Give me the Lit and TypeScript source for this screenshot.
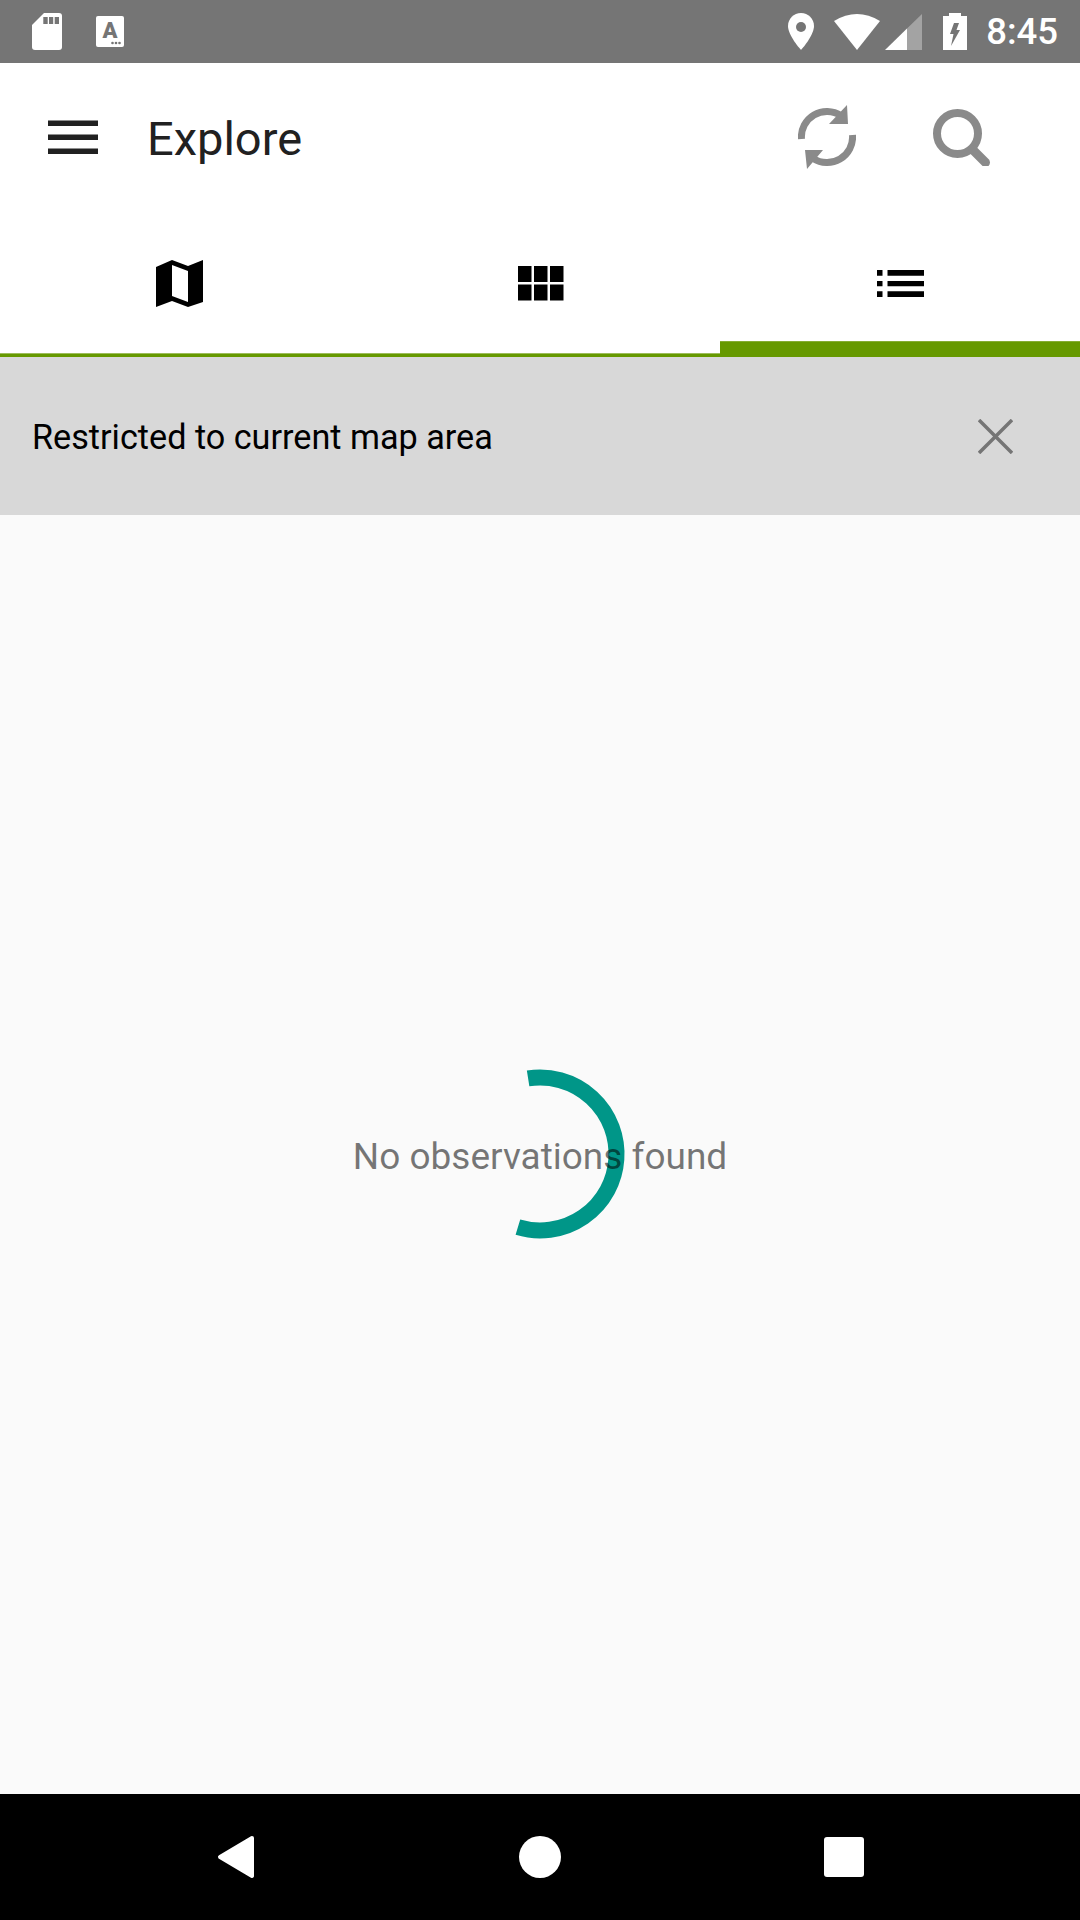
import { LitElement, css, html } from 'lit';
import { customElement } from 'lit/decorators.js';

@customElement('app-root')
export class AppRoot extends LitElement {
  render() {
    return html`
      <div class="status">
        <svg class="sd" width="30" height="37" viewBox="0 0 30 37">
          <path fill="#fff" d="M12 0H27a3 3 0 0 1 3 3V34a3 3 0 0 1-3 3H3a3 3 0 0 1-3-3V12Z" />
          <path fill="#757575" d="M11.3 4h4.4v7h-4.4zM17 4h4.2v7H17zM22.7 4H27v7h-4.3z" />
        </svg>
        <svg class="kbd" width="28" height="31" viewBox="0 0 28 31">
          <rect width="28" height="31" rx="2" fill="#fff" />
          <text x="14" y="22" text-anchor="middle" class="kbd-a">A</text>
          <circle cx="16.5" cy="27" r="1.3" fill="#757575" />
          <circle cx="20" cy="27" r="1.3" fill="#757575" />
          <circle cx="23.5" cy="27" r="1.3" fill="#757575" />
        </svg>
        <svg class="pin" width="26" height="37" viewBox="0 0 26 37">
          <path fill="#fff" d="M13 0C5.8 0 0 5.8 0 13c0 9.7 13 24 13 24s13-14.3 13-24C26 5.800 20.200 0 13 0Z" />
          <circle cx="13" cy="14" r="5" fill="#757575" />
        </svg>
        <svg class="wifi" width="46" height="36" viewBox="0 0 46 36">
          <path fill="#fff" d="M0 7Q23-7 46 7L23 36Z" />
        </svg>
        <svg class="signal" width="37" height="36" viewBox="0 0 37 36">
          <path fill="#fff" d="M0 36 22 14.600V36Z" />
          <path fill="#a3a3a3" d="M22 14.600 37 0V36H22Z" />
        </svg>
        <svg class="battery" width="24" height="37" viewBox="0 0 24 37">
          <path fill="#fff" d="M6 0H18V3H24V37H0V3H6Z" />
          <path fill="#757575" d="M11 10H16L13.500 17H17L8 33 10.500 21H7Z" />
        </svg>
        <span class="time">8:45</span>
      </div>

      <div class="toolbar">
        <svg class="menu" width="50" height="34" viewBox="0 0 50 34">
          <path fill="#212121" d="M0 .5H50V6H0zM0 14.500H50V20H0zM0 28.500H50V34H0z" />
        </svg>
        <span class="title">Explore</span>
        <svg class="refresh" width="58" height="64" viewBox="0 0 58 64">
          <g fill="none" stroke="#8a8a8a" stroke-width="7">
            <path d="M3.500 34A25.500 25.500 0 0 1 43 10.700" />
            <path d="M54.500 30A25.500 25.500 0 0 1 15 53.300" />
          </g>
          <path fill="#8a8a8a" d="M49 0 50 19H31ZM7 45H25L9 64Z" />
        </svg>
        <svg class="search" width="58" height="59" viewBox="0 0 58 59">
          <circle cx="24.500" cy="26.500" r="20.500" fill="none" stroke="#8a8a8a" stroke-width="8" />
          <path d="M40 43 52.500 55.500" fill="none" stroke="#8a8a8a" stroke-width="9" stroke-linecap="round" />
        </svg>
      </div>

      <div class="tabs">
        <div class="tab">
          <svg class="map-icon" width="47" height="47" viewBox="0 0 47 47">
            <path fill-rule="evenodd" d="M0 7 16 0 32 6 47 0V42L32 47 16 41 0 47ZM16 5V36L32 42V11Z" />
          </svg>
        </div>
        <div class="tab">
          <svg class="grid-icon" width="46" height="35" viewBox="0 0 46 35">
            <path d="M0 0H13.500V16H0zM16 0H29.500V16H16zM32 0H45.500V16H32zM0 18.500H13.500V34.500H0zM16 18.500H29.500V34.500H16zM32 18.500H45.500V34.500H32z" />
          </svg>
        </div>
        <div class="tab active">
          <svg width="47" height="27" viewBox="0 0 47 27">
            <path d="M0 0H5.500V5.700H0zM10.500 0H47V5.700H10.500zM0 11H5.500V16.300H0zM10.500 11H47V16.300H10.500zM0 21.300H5.500V27H0zM10.500 21.300H47V27H10.500z" />
          </svg>
        </div>
      </div>

      <div class="banner">
        <span>Restricted to current map area</span>
        <svg width="35" height="35" viewBox="0 0 35 35">
          <path d="M1 1 34 34M34 1 1 34" stroke="#757575" stroke-width="3.500" fill="none" />
        </svg>
      </div>

      <div class="main">
        <svg class="spinner" width="180" height="180" viewBox="0 0 180 180">
          <path d="M78.100 14.400A76.500 76.500 0 1 1 67.900 163.200" fill="none" stroke="#009688" stroke-width="16" />
        </svg>
        <span class="empty">No observations found</span>
      </div>

      <div class="nav">
        <svg width="60" height="60" viewBox="0 0 60 60">
          <path d="M46 11 14 30 46 49Z" fill="#fff" stroke="#fff" stroke-width="4" stroke-linejoin="round" />
        </svg>
        <svg width="60" height="60" viewBox="0 0 60 60">
          <circle cx="30" cy="30" r="21" fill="#fff" />
        </svg>
        <svg width="60" height="60" viewBox="0 0 60 60">
          <rect x="10" y="10" width="40" height="40" rx="3" fill="#fff" />
        </svg>
      </div>
    `;
  }

  static styles = css`
    :host {
      display: flex;
      flex-direction: column;
      width: 1080px;
      height: 1920px;
      font-family: Roboto, 'Liberation Sans', sans-serif;
      background: #fafafa;
    }

    svg {
      display: block;
      flex: none;
    }

    .status {
      display: flex;
      align-items: center;
      height: 63px;
      padding: 0 22px 0 32px;
      background: #757575;
    }

    .kbd {
      margin-left: 34px;
    }

    .kbd-a {
      font: 900 22px Roboto, sans-serif;
      fill: #757575;
    }

    .pin {
      margin-left: auto;
    }

    .wifi {
      margin-left: 20px;
    }

    .signal {
      margin-left: 5px;
    }

    .battery {
      margin-left: 21px;
    }

    .time {
      margin-left: 19px;
      color: #fff;
      font-size: 36.5px;
      font-weight: 500;
    }

    .toolbar {
      display: flex;
      align-items: center;
      height: 147px;
      padding-left: 48px;
      background: #fff;
    }

    .title {
      margin: 3px 0 0 49px;
      color: #212121;
      font-size: 47px;
    }

    .refresh {
      margin-left: auto;
    }

    .search {
      margin: 0 89px 0 77px;
    }

    .tabs {
      display: grid;
      grid-template-columns: repeat(3, 1fr);
      height: 147px;
      box-sizing: border-box;
      padding-top: 3px;
      background: #fff;
      border-bottom: 3px solid #669900;
      box-shadow: inset 0 -1px 0 #9dbd5c;
    }

    .tab {
      position: relative;
      display: flex;
      align-items: center;
      justify-content: center;
    }

    .tab.active::after {
      content: '';
      position: absolute;
      left: 0;
      right: 0;
      bottom: 0;
      height: 13px;
      background: #669900;
      box-shadow: inset 0 1px 0 #85ad33;
    }

    .map-icon {
      margin-right: 1px;
    }

    .grid-icon {
      margin-left: 2px;
    }

    .banner {
      display: flex;
      align-items: center;
      justify-content: space-between;
      height: 158px;
      box-sizing: border-box;
      padding: 0 67px 0 32px;
      background: #d8d8d8;
      color: #000;
      font-size: 34.2px;
    }

    .banner span {
      position: relative;
      top: 1px;
    }

    .main {
      position: relative;
      flex: 1;
      display: flex;
      align-items: center;
      justify-content: center;
    }

    .spinner {
      position: absolute;
      left: 450px;
      top: 549px;
    }

    .empty {
      position: relative;
      top: 2px;
      color: rgba(0, 0, 0, 0.54);
      font-size: 37px;
    }

    .nav {
      display: flex;
      align-items: center;
      justify-content: space-between;
      height: 126px;
      padding: 0 206px;
      background: #000;
    }
  `;
}
